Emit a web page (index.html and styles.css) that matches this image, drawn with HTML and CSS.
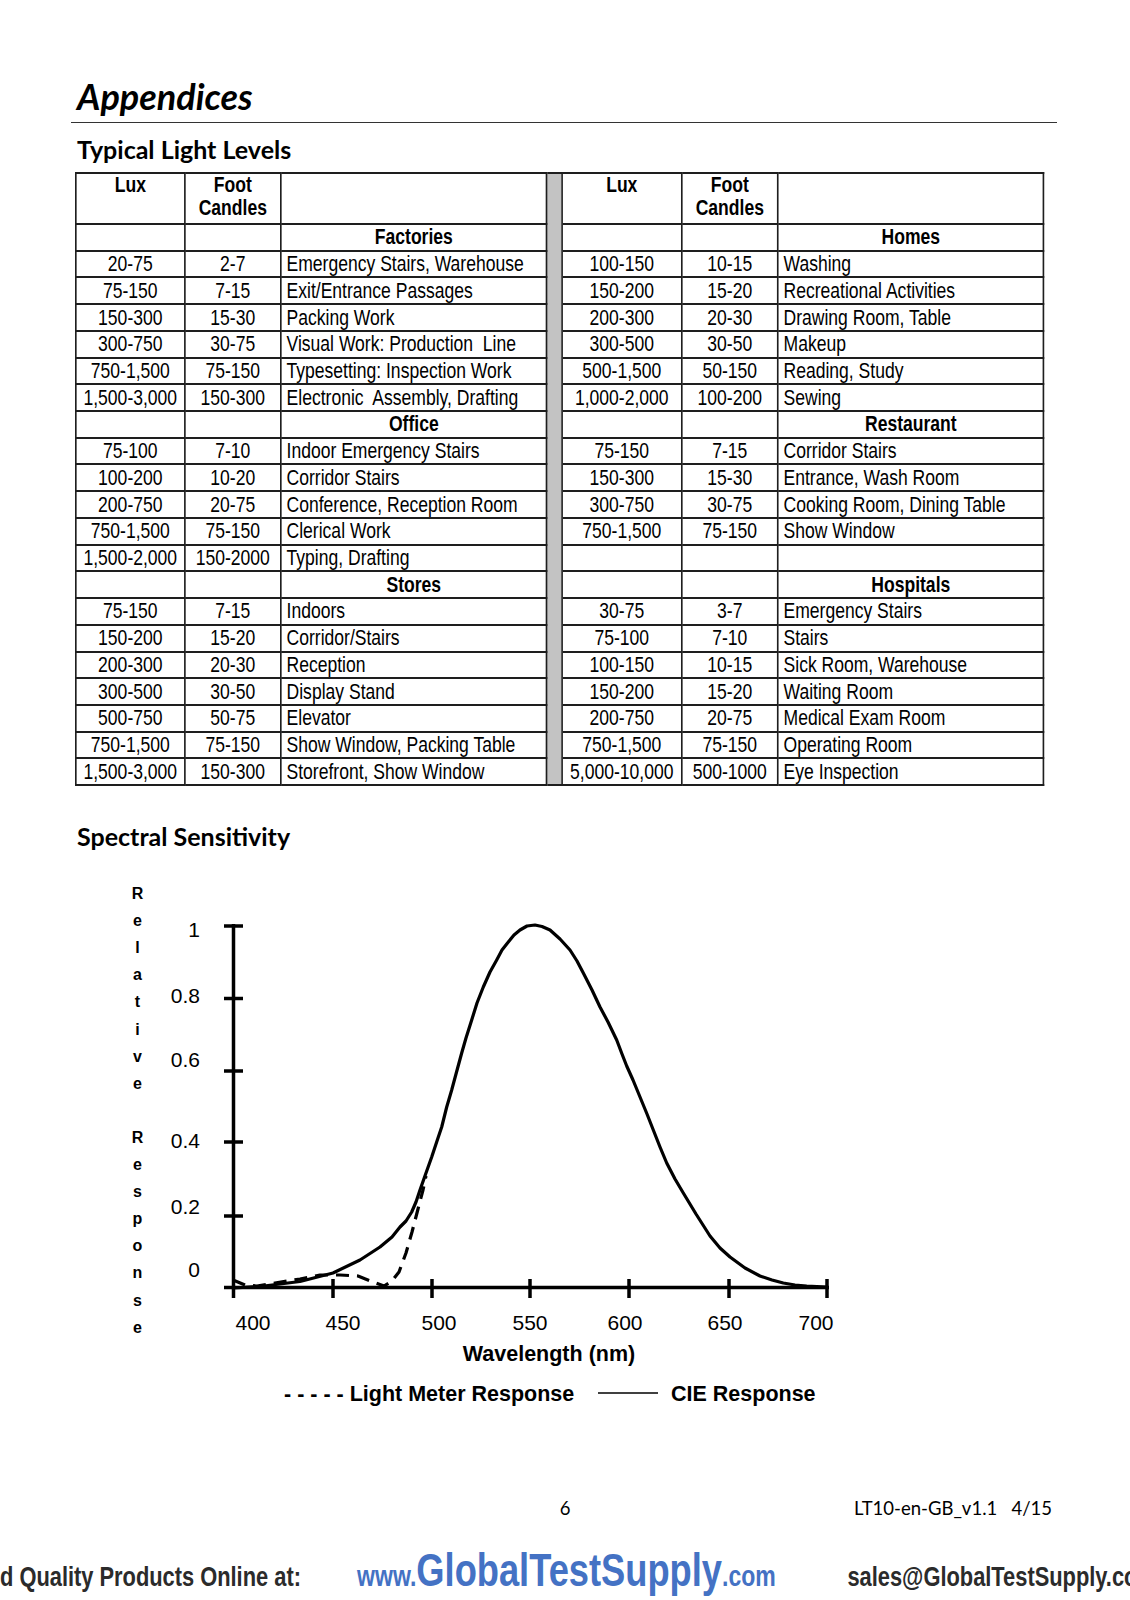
FILE: index.html
```html
<!DOCTYPE html>
<html lang="en">
<head>
<meta charset="utf-8">
<title>Appendices</title>
<link rel="stylesheet" href="styles.css">
</head>
<body>
<div class="page">
  <h1 class="title">Appendices</h1>
  <div class="rule"></div>
  <h2 class="section first">Typical Light Levels</h2>
  <div class="table-wrap">
  <table class="levels">
    <colgroup>
      <col class="c-lux"><col class="c-fc"><col class="c-desc"><col class="c-sep"><col class="c-lux2"><col class="c-fc"><col class="c-desc">
    </colgroup>
    <tr class="head"><th>Lux</th><th>Foot<br>Candles</th><th></th><td class="sep"></td><th>Lux</th><th>Foot<br>Candles</th><th></th></tr>
    <tr><td></td><td></td><th class="cat">Factories</th><td class="sep"></td><td></td><td></td><th class="cat">Homes</th></tr>
    <tr><td>20-75</td><td>2-7</td><td class="d">Emergency Stairs, Warehouse</td><td class="sep"></td><td>100-150</td><td>10-15</td><td class="d">Washing</td></tr>
    <tr><td>75-150</td><td>7-15</td><td class="d">Exit/Entrance Passages</td><td class="sep"></td><td>150-200</td><td>15-20</td><td class="d">Recreational Activities</td></tr>
    <tr><td>150-300</td><td>15-30</td><td class="d">Packing Work</td><td class="sep"></td><td>200-300</td><td>20-30</td><td class="d">Drawing Room, Table</td></tr>
    <tr><td>300-750</td><td>30-75</td><td class="d">Visual Work: Production&nbsp; Line</td><td class="sep"></td><td>300-500</td><td>30-50</td><td class="d">Makeup</td></tr>
    <tr><td>750-1,500</td><td>75-150</td><td class="d">Typesetting: Inspection Work</td><td class="sep"></td><td>500-1,500</td><td>50-150</td><td class="d">Reading, Study</td></tr>
    <tr><td>1,500-3,000</td><td>150-300</td><td class="d">Electronic&nbsp; Assembly, Drafting</td><td class="sep"></td><td>1,000-2,000</td><td>100-200</td><td class="d">Sewing</td></tr>
    <tr><td></td><td></td><th class="cat">Office</th><td class="sep"></td><td></td><td></td><th class="cat">Restaurant</th></tr>
    <tr><td>75-100</td><td>7-10</td><td class="d">Indoor Emergency Stairs</td><td class="sep"></td><td>75-150</td><td>7-15</td><td class="d">Corridor Stairs</td></tr>
    <tr><td>100-200</td><td>10-20</td><td class="d">Corridor Stairs</td><td class="sep"></td><td>150-300</td><td>15-30</td><td class="d">Entrance, Wash Room</td></tr>
    <tr><td>200-750</td><td>20-75</td><td class="d">Conference, Reception Room</td><td class="sep"></td><td>300-750</td><td>30-75</td><td class="d">Cooking Room, Dining Table</td></tr>
    <tr><td>750-1,500</td><td>75-150</td><td class="d">Clerical Work</td><td class="sep"></td><td>750-1,500</td><td>75-150</td><td class="d">Show Window</td></tr>
    <tr><td>1,500-2,000</td><td>150-2000</td><td class="d">Typing, Drafting</td><td class="sep"></td><td></td><td></td><td class="d"></td></tr>
    <tr><td></td><td></td><th class="cat">Stores</th><td class="sep"></td><td></td><td></td><th class="cat">Hospitals</th></tr>
    <tr><td>75-150</td><td>7-15</td><td class="d">Indoors</td><td class="sep"></td><td>30-75</td><td>3-7</td><td class="d">Emergency Stairs</td></tr>
    <tr><td>150-200</td><td>15-20</td><td class="d">Corridor/Stairs</td><td class="sep"></td><td>75-100</td><td>7-10</td><td class="d">Stairs</td></tr>
    <tr><td>200-300</td><td>20-30</td><td class="d">Reception</td><td class="sep"></td><td>100-150</td><td>10-15</td><td class="d">Sick Room, Warehouse</td></tr>
    <tr><td>300-500</td><td>30-50</td><td class="d">Display Stand</td><td class="sep"></td><td>150-200</td><td>15-20</td><td class="d">Waiting Room</td></tr>
    <tr><td>500-750</td><td>50-75</td><td class="d">Elevator</td><td class="sep"></td><td>200-750</td><td>20-75</td><td class="d">Medical Exam Room</td></tr>
    <tr><td>750-1,500</td><td>75-150</td><td class="d">Show Window, Packing Table</td><td class="sep"></td><td>750-1,500</td><td>75-150</td><td class="d">Operating Room</td></tr>
    <tr><td>1,500-3,000</td><td>150-300</td><td class="d">Storefront, Show Window</td><td class="sep"></td><td>5,000-10,000</td><td>500-1000</td><td class="d">Eye Inspection</td></tr>
  </table>
  </div>

  <h2 class="section second">Spectral Sensitivity</h2>

  <svg class="chart" viewBox="100 860 760 570" width="760" height="570" aria-label="Spectral sensitivity chart">
    <g class="ylabel">
      <text x="137.5" y="899">R</text>
      <text x="137.5" y="926.1">e</text>
      <text x="137.5" y="953.2">l</text>
      <text x="137.5" y="980.3">a</text>
      <text x="137.5" y="1007.4">t</text>
      <text x="137.5" y="1034.5">i</text>
      <text x="137.5" y="1061.6">v</text>
      <text x="137.5" y="1088.7">e</text>
      <text x="137.5" y="1142.9">R</text>
      <text x="137.5" y="1170">e</text>
      <text x="137.5" y="1197.1">s</text>
      <text x="137.5" y="1224.2">p</text>
      <text x="137.5" y="1251.3">o</text>
      <text x="137.5" y="1278.4">n</text>
      <text x="137.5" y="1305.5">s</text>
      <text x="137.5" y="1332.6">e</text>
    </g>
    <g class="yticks">
      <text x="200" y="937">1</text>
      <text x="200" y="1003">0.8</text>
      <text x="200" y="1067">0.6</text>
      <text x="200" y="1148">0.4</text>
      <text x="200" y="1214">0.2</text>
      <text x="200" y="1277">0</text>
    </g>
    <g class="xticks">
      <text x="253" y="1330">400</text>
      <text x="343" y="1330">450</text>
      <text x="439" y="1330">500</text>
      <text x="530" y="1330">550</text>
      <text x="625" y="1330">600</text>
      <text x="725" y="1330">650</text>
      <text x="816" y="1330">700</text>
    </g>
    <text class="xtitle" x="549" y="1361">Wavelength (nm)</text>
    <g class="axes">
      <line x1="233.5" y1="924" x2="233.5" y2="1298"/>
      <line x1="224" y1="1287.5" x2="829" y2="1287.5"/>
      <line x1="224" y1="926" x2="243" y2="926"/>
      <line x1="224" y1="998.5" x2="243" y2="998.5"/>
      <line x1="224" y1="1071" x2="243" y2="1071"/>
      <line x1="224" y1="1142" x2="243" y2="1142"/>
      <line x1="224" y1="1216" x2="243" y2="1216"/>
      <line x1="333" y1="1279" x2="333" y2="1298"/>
      <line x1="432" y1="1279" x2="432" y2="1298"/>
      <line x1="530" y1="1279" x2="530" y2="1298"/>
      <line x1="629" y1="1279" x2="629" y2="1298"/>
      <line x1="729" y1="1279" x2="729" y2="1298"/>
      <line x1="827" y1="1279" x2="827" y2="1298"/>
    </g>
    <polyline class="cie" points="233,1288 260,1286.5 300,1281.5 333,1273 360,1260 380,1247 392,1237 400,1227 406,1221 411.7,1212 416,1202 420,1190 426,1173 431.7,1157 437,1141 441.7,1127 446.7,1107 451.7,1090 456,1074 461.7,1053 466,1038 471.7,1020 477,1003 483.3,987 490,972 496.7,960 502,950 508.3,942 514,935 520,930 527,926 535,925 542,926.5 550,930 560,939 570,950 577,961 583.3,973 592,990 600,1007 608,1022 616.7,1040 622,1054 626.7,1066 633,1080 640,1097 647,1114 653.3,1130 660,1147 666.7,1163 675,1179 683.3,1193 696,1214 710,1236 720,1248 730,1257 745,1268 760,1276 772,1280 783.3,1283 795,1285 806.7,1286 827,1287"/>
    <polyline class="meter" points="233,1280 245,1285 257,1286 275,1283 300,1279 320,1275 340,1275 358,1276 373,1282 384,1286 392,1281 399,1272 406,1253 412,1232 418,1209 423,1190 426,1176"/>
    <text class="legend" x="284" y="1401">- - - - - Light Meter Response</text>
    <line class="legend-line" x1="598" y1="1393" x2="658" y2="1393"/>
    <text class="legend" x="671" y="1401">CIE Response</text>
  </svg>

  <div class="pagefoot">
    <span></span>
    <span class="pno">6</span>
    <span class="ver">LT10-en-GB_v1.1&nbsp;&nbsp; 4/15</span>
  </div>

  <div class="bar">
    <span class="shop">d Quality Products Online at:</span>
    <span class="site"><span class="small">www.</span>GlobalTestSupply<span class="small">.com</span></span>
    <span class="mail">sales@GlobalTestSupply.com</span>
  </div>
</div>
</body>
</html>
```

FILE: styles.css
```css
html, body {
  margin: 0;
  padding: 0;
  background: #fff;
  color: #000;
}

.page {
  width: 1130px;
  height: 1600px;
  overflow: hidden;
}

.title {
  margin: 0;
  padding: 75px 0 0 77px;
  font-family: Lato, "Open Sans", sans-serif;
  font-style: italic;
  font-weight: 700;
  font-size: 36px;
  line-height: 43px;
}

.rule {
  margin: 4px 0 0 71px;
  width: 986px;
  height: 1px;
  background: #333;
}

.section {
  margin: 0 0 0 77px;
  font-family: Lato, "Open Sans", sans-serif;
  font-weight: 700;
  font-size: 25px;
  line-height: 30px;
}

.section.first {
  margin-top: 11px;
}

.section.second {
  margin-top: 35px;
}

/* Arial Narrow is Arial compressed to 82%: lay the table out wide, then compress */
.table-wrap {
  margin: 8px 0 0 75px;
  width: 1180.5px;
  transform: scaleX(0.82);
  transform-origin: 0 0;
}

.levels {
  border-collapse: collapse;
  table-layout: fixed;
  width: 1180.5px;
  font-family: "Liberation Sans", Arial, sans-serif;
  font-size: 21.4px;
  line-height: 24px;
}

.c-lux { width: 132.9px; }
.c-fc { width: 117.1px; }
.c-desc { width: 324.4px; }
.c-sep { width: 18.3px; }
.c-lux2 { width: 146.3px; }

.levels td,
.levels th {
  border-style: solid;
  border-color: #1e1e1e;
  border-width: 2px 2.5px;
  padding: 0 3px;
  height: 24.73px;
  text-align: center;
  vertical-align: middle;
  white-space: nowrap;
  overflow: hidden;
  font-weight: 400;
}

.levels .head th {
  height: 49px;
  vertical-align: top;
  padding-top: 0;
  line-height: 23px;
  font-weight: 700;
}

.levels th.cat {
  font-weight: 700;
}

.levels td.d {
  text-align: left;
  padding-left: 6px;
}

.levels td.sep {
  background: #c3c3c3;
  padding: 0;
  border-top: none;
  border-bottom: none;
}

.levels tr:first-child td.sep {
  border-top: 2px solid #1e1e1e;
}

.levels tr:last-child td.sep {
  border-bottom: 2px solid #1e1e1e;
}

.chart {
  display: block;
  margin: 9px 0 0 100px;
  font-family: "Liberation Sans", Arial, sans-serif;
}

.ylabel text {
  font-size: 16px;
  font-weight: 700;
  text-anchor: middle;
}

.yticks text {
  font-size: 21px;
  text-anchor: end;
}

.xticks text {
  font-size: 21px;
  text-anchor: middle;
}

.xtitle {
  font-size: 21.5px;
  font-weight: 700;
  text-anchor: middle;
}

.legend {
  font-size: 21.5px;
  font-weight: 700;
}

.axes line {
  stroke: #000;
  stroke-width: 3.5;
}

.cie {
  fill: none;
  stroke: #000;
  stroke-width: 3.2;
  stroke-linejoin: round;
  stroke-linecap: round;
}

.meter {
  fill: none;
  stroke: #000;
  stroke-width: 3.2;
  stroke-dasharray: 13 8;
  stroke-linejoin: round;
}

.legend-line {
  stroke: #000;
  stroke-width: 1.6;
}

.pagefoot {
  margin-top: 68px;
  display: grid;
  grid-template-columns: 1fr auto 1fr;
  font-family: Lato, "Open Sans", sans-serif;
  font-size: 18.5px;
  line-height: 20px;
}

.pagefoot .ver {
  text-align: right;
  padding-right: 78px;
}

/* condensed bold face: compress Liberation Sans Bold horizontally */
.bar {
  margin-top: 29px;
  width: 1450px;
  display: flex;
  align-items: baseline;
  white-space: nowrap;
  font-family: "Liberation Sans", Arial, sans-serif;
  font-weight: 700;
  line-height: 1;
  color: #2b2b2b;
  transform: scaleX(0.78);
  transform-origin: 0 0;
}

.bar .shop {
  font-size: 28px;
}

.bar .site {
  font-size: 46.5px;
  color: #4472c4;
  margin-left: 72px;
}

.bar .site .small {
  font-size: 29.5px;
}

.bar .mail {
  font-size: 28px;
  margin-left: 92px;
}
```
